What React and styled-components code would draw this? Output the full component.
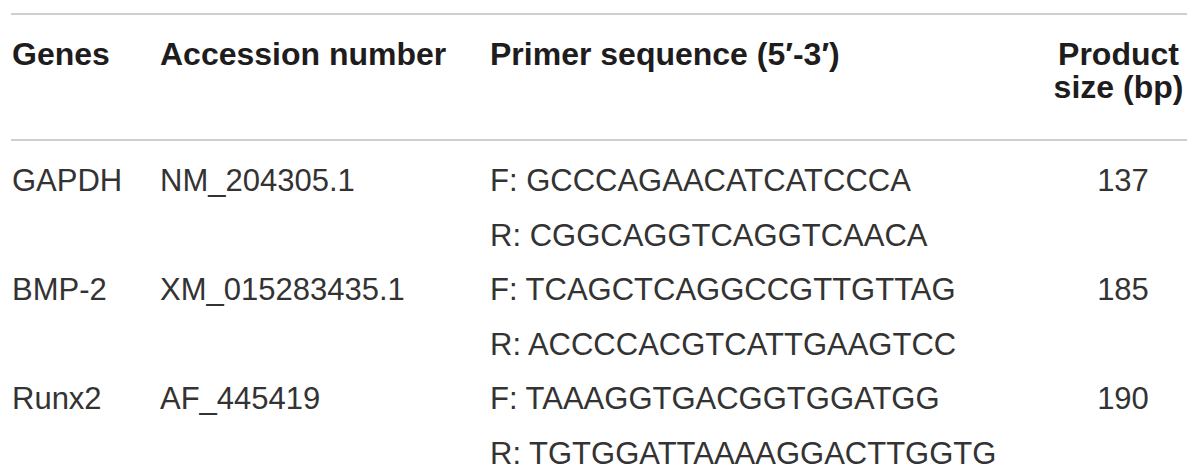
import React from 'react'
import styled, { createGlobalStyle } from 'styled-components'

const Global = createGlobalStyle`
  body {
    margin: 0;
    background: #fff;
    font-family: "Liberation Sans", Arial, sans-serif;
  }
`

const Table = styled.table`
  width: 1176px;
  margin: 13px 0 0 11px;
  border-collapse: collapse;
  border-top: 2px solid #cfcfcf;
  table-layout: fixed;
`

const Head = styled.th`
  padding: 23px 0 35px 1px;
  border-bottom: 2px solid #cfcfcf;
  text-align: ${p => (p.$center ? 'center' : 'left')};
  vertical-align: top;
  font-size: 32px;
  line-height: 33px;
  font-weight: 700;
  color: #1f1c1d;
  width: ${p => p.$w || 'auto'};
`

const Row = styled.tr`
  td {
    padding-top: ${p => (p.$first ? '13px' : '0')};
  }
`

const Cell = styled.td`
  padding: 0 0 0 ${p => (p.$center ? '10px' : '1px')};
  text-align: ${p => (p.$center ? 'center' : 'left')};
  vertical-align: top;
  font-size: 31px;
  line-height: 54.5px;
  color: #333;
`

const Line = styled.div`
  white-space: nowrap;
`

const rows = [
  { gene: 'GAPDH', acc: 'NM_204305.1', f: 'GCCCAGAACATCATCCCA', r: 'CGGCAGGTCAGGTCAACA', size: 137 },
  { gene: 'BMP-2', acc: 'XM_015283435.1', f: 'TCAGCTCAGGCCGTTGTTAG', r: 'ACCCCACGTCATTGAAGTCC', size: 185 },
  { gene: 'Runx2', acc: 'AF_445419', f: 'TAAAGGTGACGGTGGATGG', r: 'TGTGGATTAAAAGGACTTGGTG', size: 190 },
]

export default function App() {
  return (
    <>
      <Global />
      <Table>
        <thead>
          <tr>
            <Head $w="147px">Genes</Head>
            <Head $w="329px">Accession number</Head>
            <Head>Primer sequence (5′-3′)</Head>
            <Head $w="137px" $center>Product<br />size (bp)</Head>
          </tr>
        </thead>
        <tbody>
          {rows.map((r, i) => (
            <Row key={r.gene} $first={i === 0}>
              <Cell>{r.gene}</Cell>
              <Cell>{r.acc}</Cell>
              <Cell>
                <Line>F: {r.f}</Line>
                <Line>R: {r.r}</Line>
              </Cell>
              <Cell $center>{r.size}</Cell>
            </Row>
          ))}
        </tbody>
      </Table>
    </>
  )
}
